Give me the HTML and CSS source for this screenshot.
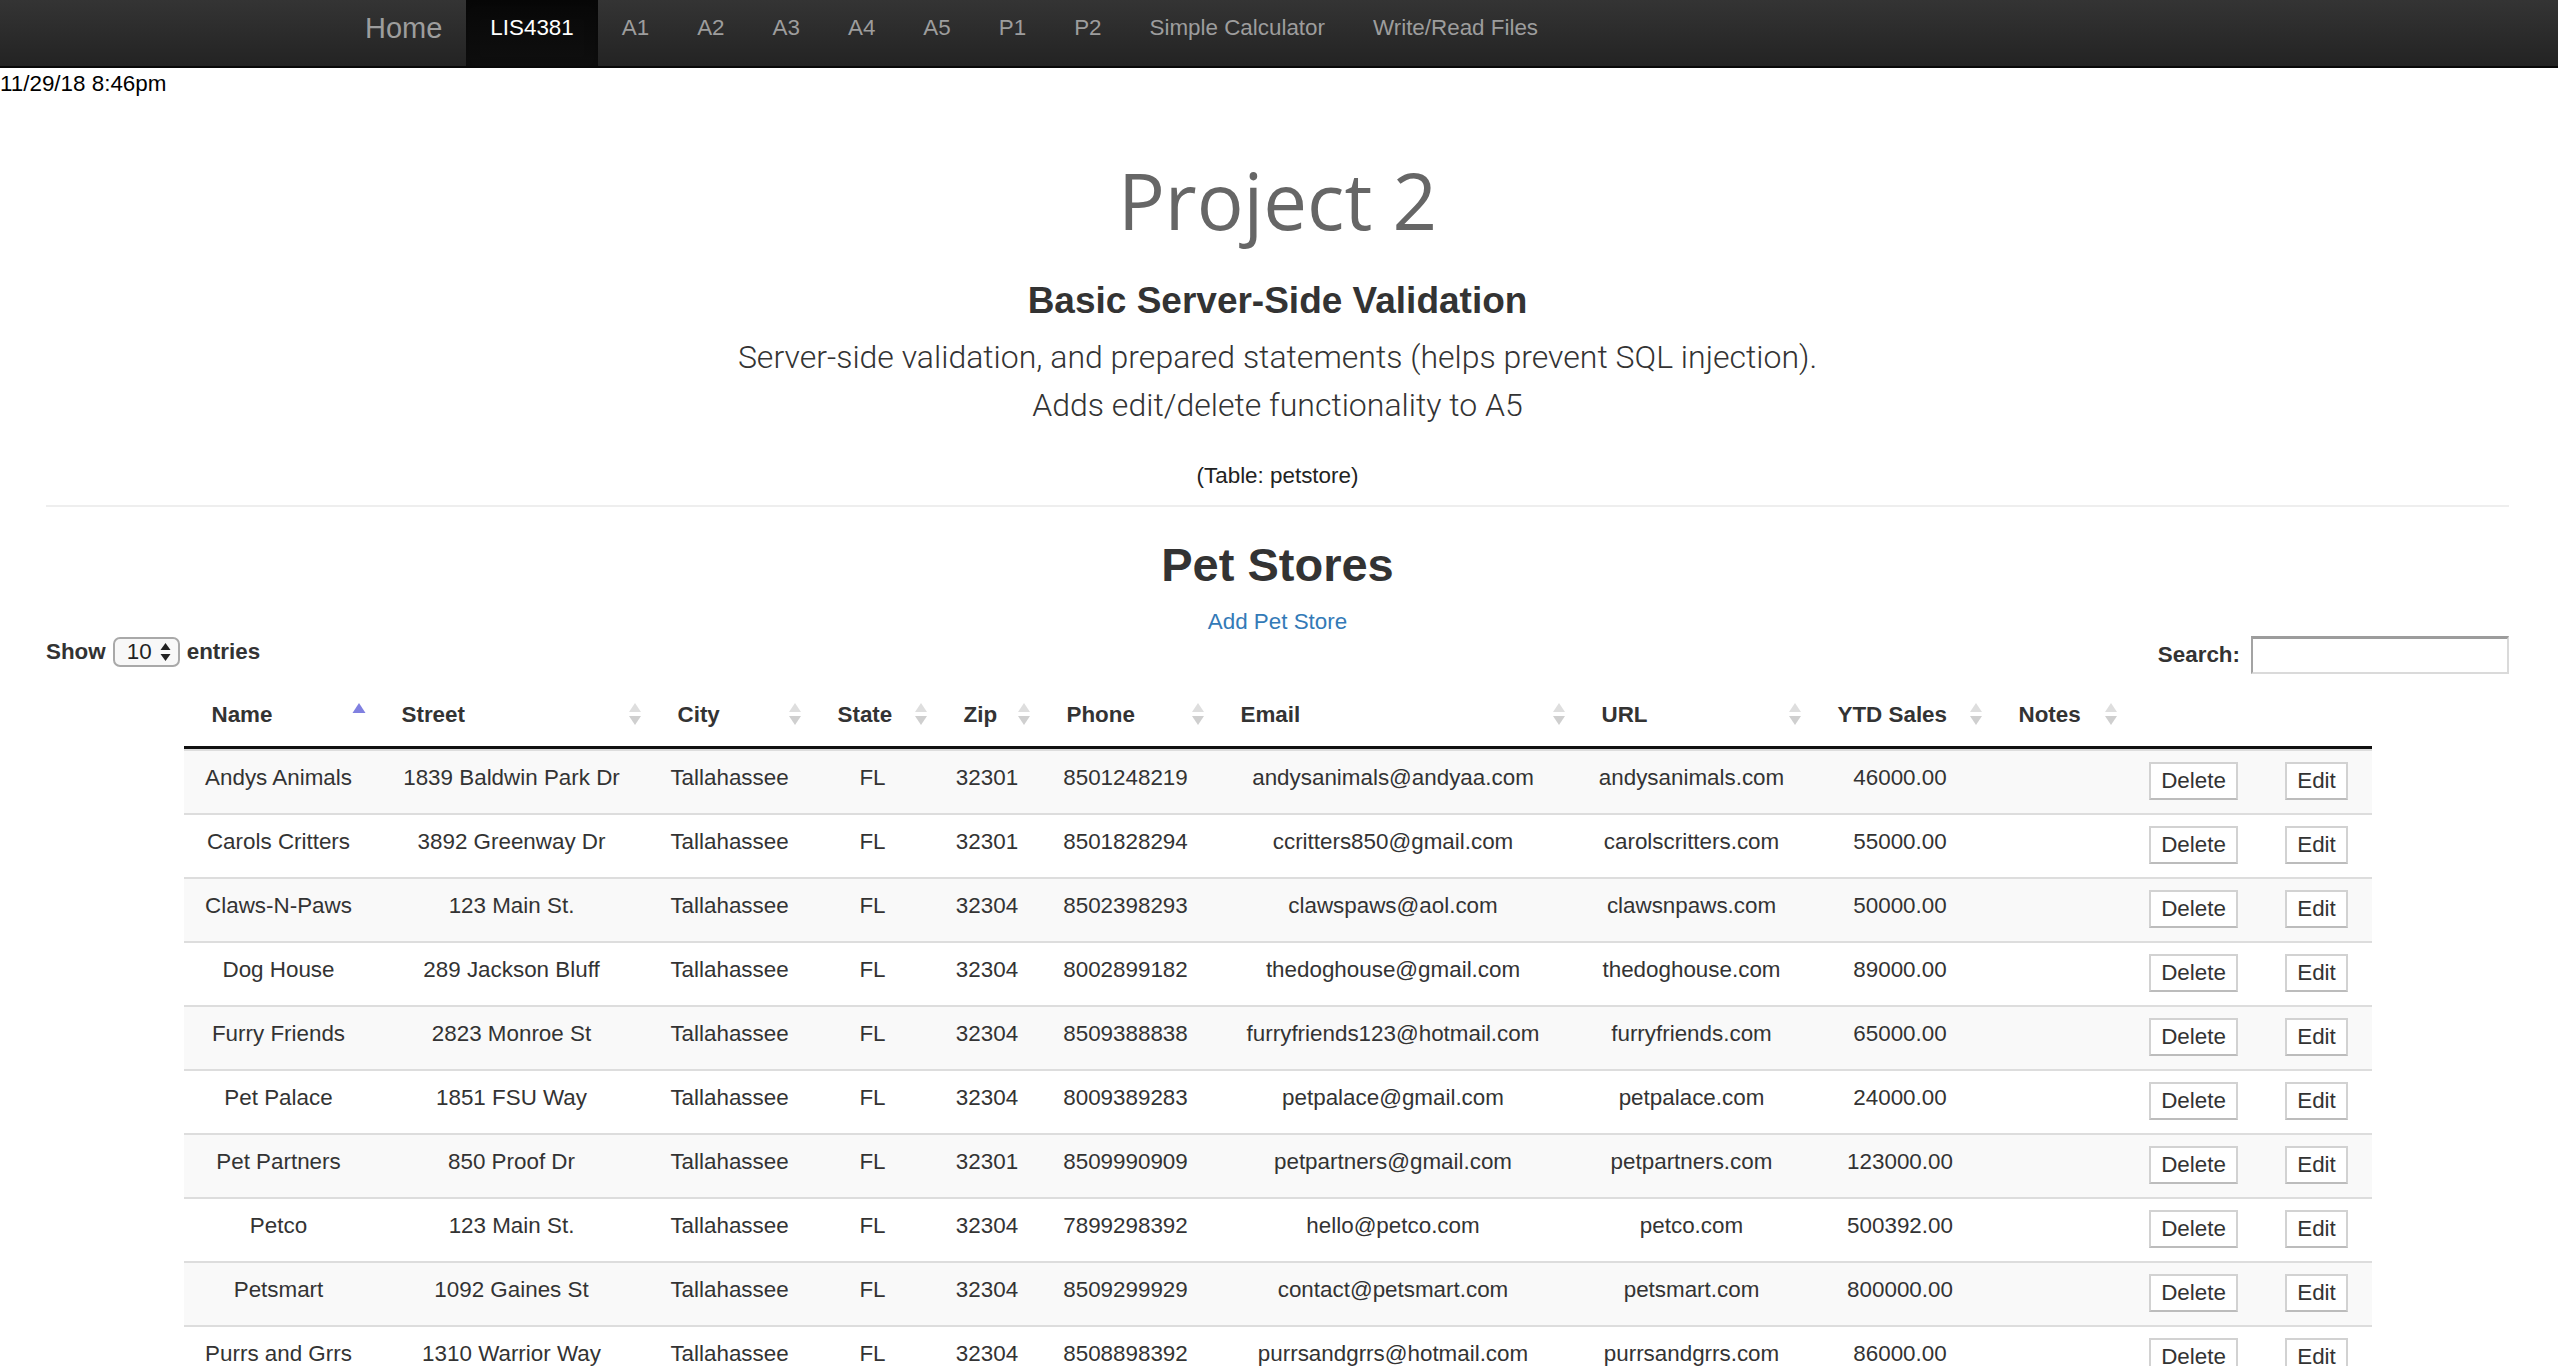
FILE: index.html
```html
<!DOCTYPE html>
<html lang="en">
<head>
<meta charset="utf-8">
<title>LIS4381 - Project 2</title>
<link rel="stylesheet" href="styles.css">
</head>
<body>
<nav class="navbar">
  <div class="nav-inner">
    <a class="nav-brand" href="#">Home</a>
    <a class="nav-link active" href="#">LIS4381</a>
    <a class="nav-link" href="#">A1</a>
    <a class="nav-link" href="#">A2</a>
    <a class="nav-link" href="#">A3</a>
    <a class="nav-link" href="#">A4</a>
    <a class="nav-link" href="#">A5</a>
    <a class="nav-link" href="#">P1</a>
    <a class="nav-link" href="#">P2</a>
    <a class="nav-link" href="#">Simple Calculator</a>
    <a class="nav-link" href="#">Write/Read Files</a>
  </div>
</nav>
<div class="date">11/29/18 8:46pm</div>
<main class="container">
  <h1 class="title">Project 2</h1>
  <h3 class="subtitle">Basic Server-Side Validation</h3>
  <p class="lead">Server-side validation, and prepared statements (helps prevent SQL injection).<br>Adds edit/delete functionality to A5</p>
  <p class="tname">(Table: petstore)</p>
  <hr class="rule">
  <h2 class="section">Pet Stores</h2>
  <p class="add"><a href="#">Add Pet Store</a></p>
  <div class="dt-top">
    <div class="length">
      <span class="lbl">Show</span>
      <span class="select">10<svg class="sel-arrows" width="11" height="18" viewBox="0 0 11 18"><path d="M5.5 0L10.5 7H0.5z" fill="#222"/><path d="M0.5 11H10.5L5.5 18z" fill="#222"/></svg></span>
      <span class="lbl">entries</span>
    </div>
    <div class="search">
      <span class="lbl">Search:</span>
      <input class="search-input" type="text">
    </div>
  </div>
  <table class="stores">
    <colgroup>
      <col class="c-name"><col class="c-street"><col class="c-city"><col class="c-state"><col class="c-zip"><col class="c-phone"><col class="c-email"><col class="c-url"><col class="c-ytd"><col class="c-notes"><col class="c-del"><col class="c-edit">
    </colgroup>
    <thead>
      <tr>
        <th><div class="th-in">Name<svg class="sort" width="14" height="22" viewBox="0 0 14 22"><path d="M7 0L13.5 10H0.5z" fill="#8080e0"/></svg></div></th>
        <th><div class="th-in">Street<svg class="sort" width="14" height="22" viewBox="0 0 14 22"><path d="M7 0L13 9H1z" fill="#dedede"/><path d="M1 13H13L7 22z" fill="#cfcfcf"/></svg></div></th>
        <th><div class="th-in">City<svg class="sort" width="14" height="22" viewBox="0 0 14 22"><path d="M7 0L13 9H1z" fill="#dedede"/><path d="M1 13H13L7 22z" fill="#cfcfcf"/></svg></div></th>
        <th><div class="th-in">State<svg class="sort" width="14" height="22" viewBox="0 0 14 22"><path d="M7 0L13 9H1z" fill="#dedede"/><path d="M1 13H13L7 22z" fill="#cfcfcf"/></svg></div></th>
        <th><div class="th-in">Zip<svg class="sort" width="14" height="22" viewBox="0 0 14 22"><path d="M7 0L13 9H1z" fill="#dedede"/><path d="M1 13H13L7 22z" fill="#cfcfcf"/></svg></div></th>
        <th><div class="th-in">Phone<svg class="sort" width="14" height="22" viewBox="0 0 14 22"><path d="M7 0L13 9H1z" fill="#dedede"/><path d="M1 13H13L7 22z" fill="#cfcfcf"/></svg></div></th>
        <th><div class="th-in">Email<svg class="sort" width="14" height="22" viewBox="0 0 14 22"><path d="M7 0L13 9H1z" fill="#dedede"/><path d="M1 13H13L7 22z" fill="#cfcfcf"/></svg></div></th>
        <th><div class="th-in">URL<svg class="sort" width="14" height="22" viewBox="0 0 14 22"><path d="M7 0L13 9H1z" fill="#dedede"/><path d="M1 13H13L7 22z" fill="#cfcfcf"/></svg></div></th>
        <th><div class="th-in">YTD Sales<svg class="sort" width="14" height="22" viewBox="0 0 14 22"><path d="M7 0L13 9H1z" fill="#dedede"/><path d="M1 13H13L7 22z" fill="#cfcfcf"/></svg></div></th>
        <th><div class="th-in">Notes<svg class="sort" width="14" height="22" viewBox="0 0 14 22"><path d="M7 0L13 9H1z" fill="#dedede"/><path d="M1 13H13L7 22z" fill="#cfcfcf"/></svg></div></th>
        <th></th>
        <th></th>
      </tr>
    </thead>
    <tbody>
      <tr><td>Andys Animals</td><td>1839 Baldwin Park Dr</td><td>Tallahassee</td><td>FL</td><td>32301</td><td>8501248219</td><td>andysanimals@andyaa.com</td><td>andysanimals.com</td><td>46000.00</td><td></td><td><button class="btn">Delete</button></td><td><button class="btn">Edit</button></td></tr>
      <tr><td>Carols Critters</td><td>3892 Greenway Dr</td><td>Tallahassee</td><td>FL</td><td>32301</td><td>8501828294</td><td>ccritters850@gmail.com</td><td>carolscritters.com</td><td>55000.00</td><td></td><td><button class="btn">Delete</button></td><td><button class="btn">Edit</button></td></tr>
      <tr><td>Claws-N-Paws</td><td>123 Main St.</td><td>Tallahassee</td><td>FL</td><td>32304</td><td>8502398293</td><td>clawspaws@aol.com</td><td>clawsnpaws.com</td><td>50000.00</td><td></td><td><button class="btn">Delete</button></td><td><button class="btn">Edit</button></td></tr>
      <tr><td>Dog House</td><td>289 Jackson Bluff</td><td>Tallahassee</td><td>FL</td><td>32304</td><td>8002899182</td><td>thedoghouse@gmail.com</td><td>thedoghouse.com</td><td>89000.00</td><td></td><td><button class="btn">Delete</button></td><td><button class="btn">Edit</button></td></tr>
      <tr><td>Furry Friends</td><td>2823 Monroe St</td><td>Tallahassee</td><td>FL</td><td>32304</td><td>8509388838</td><td>furryfriends123@hotmail.com</td><td>furryfriends.com</td><td>65000.00</td><td></td><td><button class="btn">Delete</button></td><td><button class="btn">Edit</button></td></tr>
      <tr><td>Pet Palace</td><td>1851 FSU Way</td><td>Tallahassee</td><td>FL</td><td>32304</td><td>8009389283</td><td>petpalace@gmail.com</td><td>petpalace.com</td><td>24000.00</td><td></td><td><button class="btn">Delete</button></td><td><button class="btn">Edit</button></td></tr>
      <tr><td>Pet Partners</td><td>850 Proof Dr</td><td>Tallahassee</td><td>FL</td><td>32301</td><td>8509990909</td><td>petpartners@gmail.com</td><td>petpartners.com</td><td>123000.00</td><td></td><td><button class="btn">Delete</button></td><td><button class="btn">Edit</button></td></tr>
      <tr><td>Petco</td><td>123 Main St.</td><td>Tallahassee</td><td>FL</td><td>32304</td><td>7899298392</td><td>hello@petco.com</td><td>petco.com</td><td>500392.00</td><td></td><td><button class="btn">Delete</button></td><td><button class="btn">Edit</button></td></tr>
      <tr><td>Petsmart</td><td>1092 Gaines St</td><td>Tallahassee</td><td>FL</td><td>32304</td><td>8509299929</td><td>contact@petsmart.com</td><td>petsmart.com</td><td>800000.00</td><td></td><td><button class="btn">Delete</button></td><td><button class="btn">Edit</button></td></tr>
      <tr><td>Purrs and Grrs</td><td>1310 Warrior Way</td><td>Tallahassee</td><td>FL</td><td>32304</td><td>8508898392</td><td>purrsandgrrs@hotmail.com</td><td>purrsandgrrs.com</td><td>86000.00</td><td></td><td><button class="btn">Delete</button></td><td><button class="btn">Edit</button></td></tr>
    </tbody>
  </table>
</main>
</body>
</html>
```
FILE: styles.css
```css
html {
  scrollbar-width: none;
}
html::-webkit-scrollbar {
  display: none;
}
body {
  margin: 0;
  font-family: "Liberation Sans", Arial, Helvetica, sans-serif;
  font-size: 22.4px;
  color: #333;
  background: #fff;
}

/* navbar */
.navbar {
  height: 66px;
  background: linear-gradient(#343434, #232323);
  border-bottom: 2px solid #080808;
}
.nav-inner {
  width: 1876px;
  margin: 0 auto;
  display: flex;
  height: 66px;
}
.nav-brand {
  padding: 12px 24px 0;
  line-height: 32px;
  font-size: 29px;
  color: #9d9d9d;
  text-decoration: none;
}
.nav-link {
  padding: 12px 24px 0;
  line-height: 32px;
  font-size: 22.4px;
  color: #9d9d9d;
  text-decoration: none;
}
.nav-link.active {
  background: linear-gradient(#080808, #0f0f0f);
  color: #fff;
  box-shadow: inset 0 5px 14px rgba(0, 0, 0, 0.25);
}

.date {
  height: 30px;
  padding-top: 1px;
  line-height: 30px;
  color: #000;
}

.container {
  padding: 0 49px 0 46px;
}
.title {
  margin: 58px 0 0;
  font-family: "Open Sans", "Liberation Sans", sans-serif;
  font-weight: 400;
  font-size: 78px;
  line-height: 86px;
  color: #666;
  text-align: center;
}
.subtitle {
  margin: 36px 0 0;
  font-size: 37px;
  line-height: 44px;
  font-weight: bold;
  color: #333;
  text-align: center;
}
.lead {
  margin: 10px 0 0;
  font-family: Roboto, "Liberation Sans", sans-serif;
  font-weight: 300;
  font-size: 32px;
  line-height: 48px;
  color: #333;
  text-align: center;
}
.tname {
  margin: 31px 0 0;
  line-height: 32px;
  text-align: center;
  color: #222;
}
.rule {
  margin: 13px 0 0;
  border: 0;
  border-top: 2px solid #eee;
  height: 0;
}
.section {
  margin: 30px 0 0;
  font-size: 47px;
  line-height: 56px;
  font-weight: bold;
  color: #333;
  text-align: center;
}
.add {
  margin: 14px 0 0;
  line-height: 29px;
  text-align: center;
}
.add a {
  color: #337ab7;
  text-decoration: none;
}

/* datatable controls */
.dt-top {
  display: flex;
  justify-content: space-between;
  height: 38px;
}
.lbl {
  font-weight: bold;
  color: #333;
}
.length {
  display: flex;
  align-items: center;
  height: 30px;
  margin-top: 1px;
  line-height: 30px;
}
.select {
  display: inline-flex;
  align-items: center;
  box-sizing: border-box;
  width: 67px;
  height: 30px;
  margin: 0 7px;
  padding: 0 0 0 12px;
  border: 2px solid #a9a9a9;
  border-radius: 7px;
  background: #f8f8f8;
  color: #222;
  font-size: 22.4px;
}
.sel-arrows {
  margin-left: 8px;
}
.search {
  display: flex;
  align-items: center;
  height: 38px;
}
.search-input {
  box-sizing: border-box;
  width: 258px;
  height: 38px;
  margin: 0 0 0 11px;
  padding: 0;
  border-style: solid;
  border-width: 3px 2px 2px 2px;
  border-color: #9c9c9c #dadada #dadada #a3a3a3;
  background: #fff;
}

/* table */
.stores {
  table-layout: fixed;
  width: 2188px;
  margin: 8px auto 0;
  border-collapse: separate;
  border-spacing: 0;
}
.c-name { width: 190px; }
.c-street { width: 276px; }
.c-city { width: 160px; }
.c-state { width: 126px; }
.c-zip { width: 103px; }
.c-phone { width: 174px; }
.c-email { width: 361px; }
.c-url { width: 236px; }
.c-ytd { width: 181px; }
.c-notes { width: 135px; }
.c-del { width: 136px; }
.c-edit { width: 110px; }

.stores th {
  padding: 17px 8px 15px 28px;
  line-height: 32px;
  text-align: left;
  font-weight: bold;
  color: #333;
  border-bottom: 3px solid #111;
  white-space: nowrap;
}
.th-in {
  display: flex;
  align-items: center;
  justify-content: space-between;
  height: 32px;
}
.sort {
  flex: none;
  margin-top: -2px;
}
.stores td {
  padding: 11px 4px 13px;
  line-height: 32px;
  vertical-align: top;
  text-align: center;
  color: #333;
  border-top: 2px solid #ddd;
  white-space: nowrap;
}
.stores tbody tr:nth-child(odd) td {
  background: #f9f9f9;
}
.btn {
  display: inline-block;
  vertical-align: top;
  margin-top: 0;
  height: 38px;
  box-sizing: border-box;
  padding: 0 10px;
  font-family: "Liberation Sans", Arial, sans-serif;
  font-size: 22.4px;
  line-height: 32px;
  color: #333;
  background: #fff;
  border: 2px solid #d2d2d2;
  border-bottom-color: #bcbcbc;
  border-radius: 0;
}
```
